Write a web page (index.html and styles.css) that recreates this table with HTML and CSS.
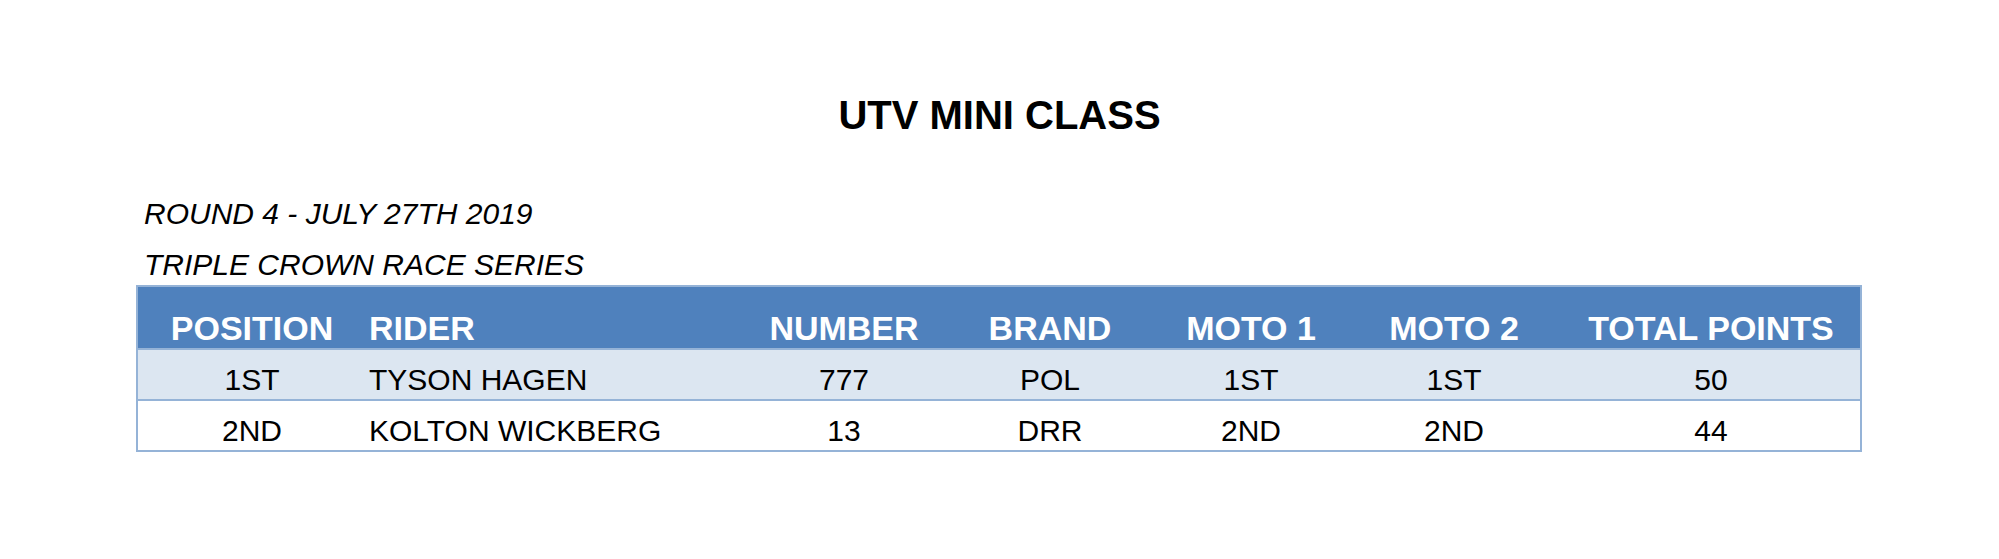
FILE: index.html
```html
<!DOCTYPE html>
<html lang="en">
<head>
<meta charset="utf-8">
<title>UTV Mini Class</title>
<link rel="stylesheet" href="styles.css">
</head>
<body>
<main class="page">
  <h1 class="title">UTV MINI CLASS</h1>
  <section class="results">
    <p class="sub sub-first">ROUND 4 - JULY 27TH 2019</p>
    <p class="sub sub-second">TRIPLE CROWN RACE SERIES</p>
    <table class="standings">
      <colgroup>
        <col class="c-pos">
        <col class="c-rider">
        <col class="c-num">
        <col class="c-brand">
        <col class="c-m1">
        <col class="c-m2">
        <col class="c-total">
      </colgroup>
      <thead>
        <tr>
          <th>POSITION</th>
          <th class="left">RIDER</th>
          <th>NUMBER</th>
          <th>BRAND</th>
          <th>MOTO 1</th>
          <th>MOTO 2</th>
          <th>TOTAL POINTS</th>
        </tr>
      </thead>
      <tbody>
        <tr class="alt">
          <td>1ST</td>
          <td class="left">TYSON HAGEN</td>
          <td>777</td>
          <td>POL</td>
          <td>1ST</td>
          <td>1ST</td>
          <td>50</td>
        </tr>
        <tr>
          <td>2ND</td>
          <td class="left">KOLTON WICKBERG</td>
          <td>13</td>
          <td>DRR</td>
          <td>2ND</td>
          <td>2ND</td>
          <td>44</td>
        </tr>
      </tbody>
    </table>
  </section>
</main>
</body>
</html>
```

FILE: styles.css
```css
html, body {
  margin: 0;
  padding: 0;
  background: #ffffff;
}

body {
  font-family: "Liberation Sans", Arial, sans-serif;
  color: #000000;
  width: 1999px;
  height: 559px;
  overflow: hidden;
}

.page {
  padding-top: 90px;
}

.title {
  margin: 0;
  font-size: 40px;
  line-height: 50px;
  font-weight: bold;
  text-align: center;
}

.results {
  margin-top: 54px;
  padding-left: 136px;
}

.sub {
  margin: 0 0 0 8px;
  font-size: 30px;
  line-height: 40px;
  font-style: italic;
}

.sub-second {
  margin-top: 11px;
}

.standings {
  width: 1726px;
  table-layout: fixed;
  border-collapse: separate;
  border-spacing: 0;
  border: 2px solid #95b3d7;
}

.c-pos { width: 228px; }
.c-rider { width: 378px; }
.c-num { width: 200px; }
.c-brand { width: 212px; }
.c-m1 { width: 190px; }
.c-m2 { width: 216px; }
.c-total { width: 298px; }

.standings th {
  background: #4f81bd;
  color: #ffffff;
  font-size: 34px;
  font-weight: bold;
  line-height: 40px;
  padding: 21px 0 0;
  text-align: center;
  white-space: nowrap;
}

.standings td {
  font-size: 30px;
  line-height: 38px;
  padding: 11px 0 0;
  text-align: center;
  border-top: 2px solid #95b3d7;
  white-space: nowrap;
}

.standings .left {
  text-align: left;
  padding-left: 3px;
}

.standings tr.alt td {
  background: #dce6f1;
}
```
